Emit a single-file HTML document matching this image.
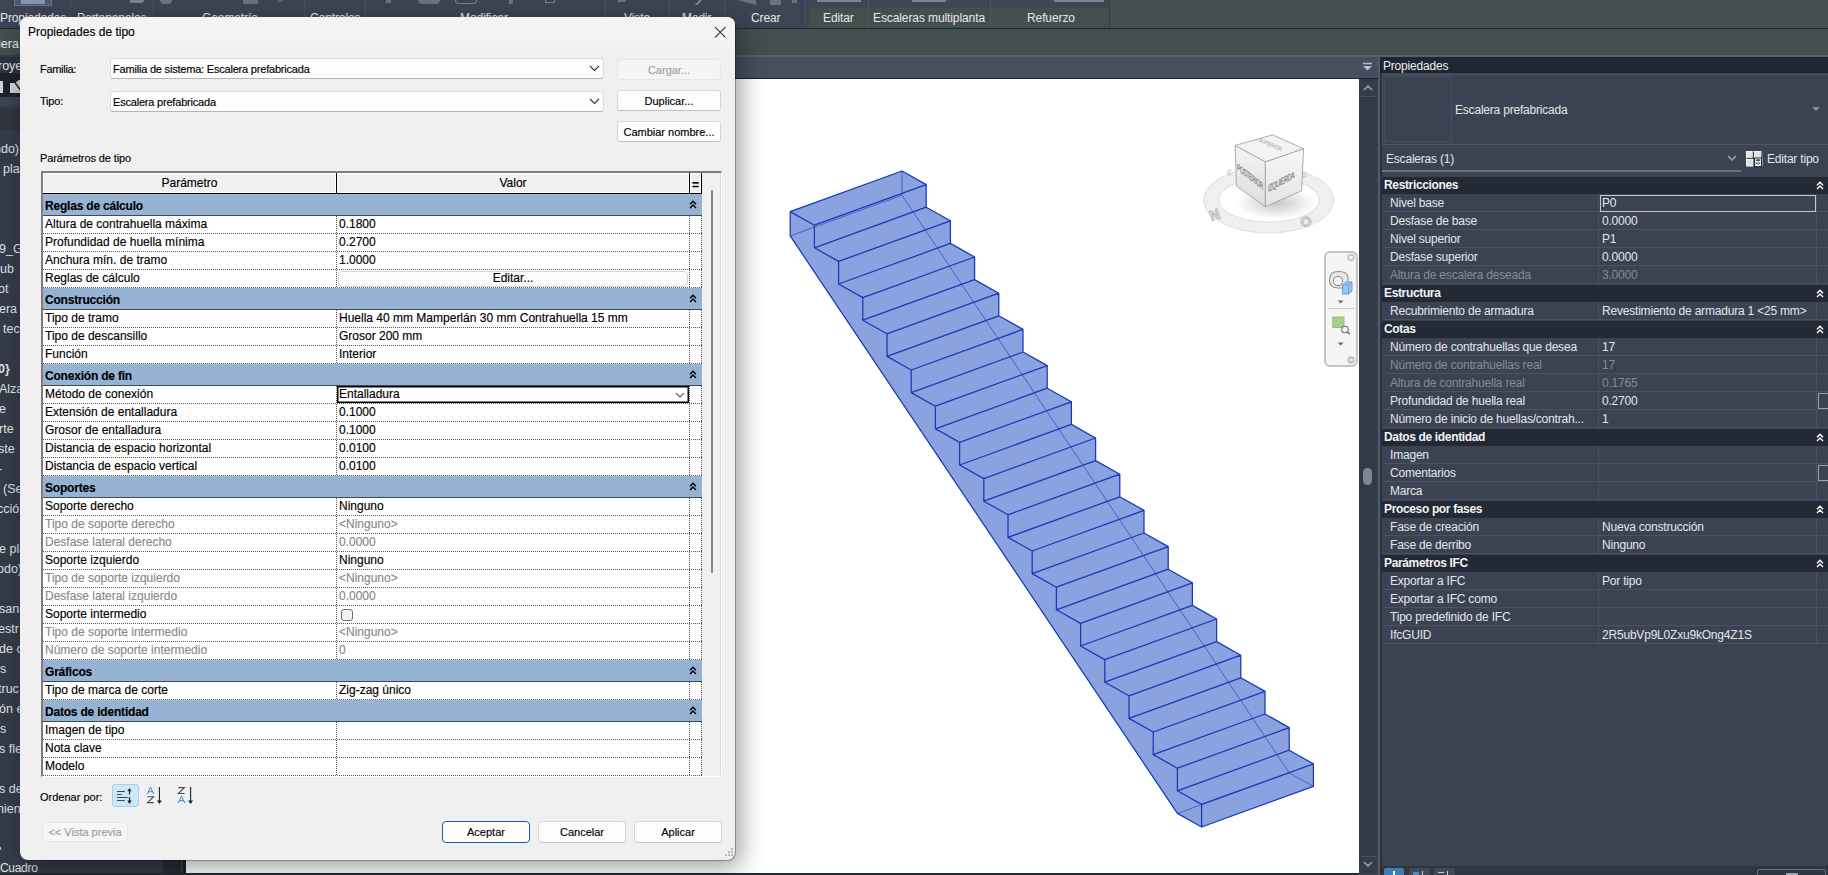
<!DOCTYPE html>
<html><head><meta charset="utf-8">
<style>
*{box-sizing:border-box;margin:0;padding:0}
html,body{width:1828px;height:875px;overflow:hidden}
body{position:relative;background:#3b4352;font-family:"Liberation Sans",sans-serif;font-size:12px;color:#000}
.a{position:absolute}
.t{position:absolute;white-space:nowrap;line-height:14px}
.dlgt .t{-webkit-text-stroke:0.15px currentColor}
#ribbon{left:0;top:0;width:1828px;height:28px;background:#3d4555}
#ribline{left:0;top:28px;width:1828px;height:1px;background:#212929}
#optbar{left:0;top:29px;width:1828px;height:26px;background:#434f4f}
.rl{color:#e6e8ea;font-size:12.5px}
#browser{left:0;top:55px;width:186px;height:820px;background:#353c49}
.bl{color:#dfe3e8;font-size:12.5px}
#tabbar{left:186px;top:55px;width:1192px;height:23px;background:#464e60;border-top:2px solid #56616d}
#viewline{left:186px;top:78px;width:1192px;height:1px;background:#1c2028}
#view{left:186px;top:79px;width:1173px;height:794px;background:#fff;overflow:hidden}
#vscroll{left:1359px;top:79px;width:18px;height:794px;background:#333a46}
#status{left:0;top:873px;width:1359px;height:2px;background:#252a33}
#props{left:1378px;top:55px;width:450px;height:820px;background:#3b4352}
.pt{color:#e3e6ea;font-size:12px}
.pd{color:#8a909a}
#dlg{left:20px;top:17px;width:715px;height:843px;background:#f0f0f0;border-radius:8px;box-shadow:1px 1px 0 0 rgba(0,0,0,.28),5px 7px 26px rgba(0,0,0,.4)}
.dr{left:43px;width:659px;height:18px;background:#fff linear-gradient(90deg,#5a5a5a 50%,transparent 50%) 0 17px/2px 1px repeat-x}
.dv{width:1px;background:linear-gradient(180deg,#5a5a5a 50%,transparent 50%) 0 0/1px 2px repeat-y}
</style></head>
<body>
<div id="ribbon" class="a"></div>
<div id="ribline" class="a"></div>
<div id="optbar" class="a"></div>
<div id="browser" class="a"></div>
<!--BROWSER-->
<div id="tabbar" class="a"></div>
<div id="viewline" class="a"></div>
<div id="view" class="a"></div>
<div id="vscroll" class="a"></div>
<svg class="a" style="left:0;top:0" width="1828" height="875" viewBox="0 0 1828 875">
<polygon points="790.20,211.60 902.00,171.00 926.20,184.60 926.20,207.20 950.40,220.80 950.40,243.40 974.60,257.00 974.60,279.60 998.80,293.20 998.80,315.80 1023.00,329.40 1023.00,352.00 1047.20,365.60 1047.20,388.20 1071.40,401.80 1071.40,424.40 1095.60,438.00 1095.60,460.60 1119.80,474.20 1119.80,496.80 1144.00,510.40 1144.00,533.00 1168.20,546.60 1168.20,569.20 1192.40,582.80 1192.40,605.40 1216.60,619.00 1216.60,641.60 1240.80,655.20 1240.80,677.80 1265.00,691.40 1265.00,714.00 1289.20,727.60 1289.20,750.20 1313.40,763.80 1313.40,786.40 1201.60,827.00 1177.40,813.40 790.20,235.90" fill="#8aa2e0"/>
<path d="M902.00,171.00L902.00,195.00M790.20,235.90L902.00,195.30M902.00,195.30L1289.20,772.80M1177.40,813.40L1289.20,772.80M1289.20,772.80L1313.40,786.40" stroke="#3552c4" stroke-width="0.8" fill="none"/>
<path d="M790.20,211.60L902.00,171.00M902.00,171.00L926.20,184.60M790.20,211.60L814.40,225.20M790.20,211.60L790.20,235.90M790.20,235.90L1177.40,813.40M1177.40,813.40L1201.60,827.00M1201.60,827.00L1313.40,786.40M814.40,225.20L926.20,184.60M814.40,247.80L926.20,207.20M814.40,225.20L814.40,247.80M926.20,184.60L926.20,207.20M814.40,247.80L838.60,261.40M926.20,207.20L950.40,220.80M838.60,261.40L950.40,220.80M838.60,284.00L950.40,243.40M838.60,261.40L838.60,284.00M950.40,220.80L950.40,243.40M838.60,284.00L862.80,297.60M950.40,243.40L974.60,257.00M862.80,297.60L974.60,257.00M862.80,320.20L974.60,279.60M862.80,297.60L862.80,320.20M974.60,257.00L974.60,279.60M862.80,320.20L887.00,333.80M974.60,279.60L998.80,293.20M887.00,333.80L998.80,293.20M887.00,356.40L998.80,315.80M887.00,333.80L887.00,356.40M998.80,293.20L998.80,315.80M887.00,356.40L911.20,370.00M998.80,315.80L1023.00,329.40M911.20,370.00L1023.00,329.40M911.20,392.60L1023.00,352.00M911.20,370.00L911.20,392.60M1023.00,329.40L1023.00,352.00M911.20,392.60L935.40,406.20M1023.00,352.00L1047.20,365.60M935.40,406.20L1047.20,365.60M935.40,428.80L1047.20,388.20M935.40,406.20L935.40,428.80M1047.20,365.60L1047.20,388.20M935.40,428.80L959.60,442.40M1047.20,388.20L1071.40,401.80M959.60,442.40L1071.40,401.80M959.60,465.00L1071.40,424.40M959.60,442.40L959.60,465.00M1071.40,401.80L1071.40,424.40M959.60,465.00L983.80,478.60M1071.40,424.40L1095.60,438.00M983.80,478.60L1095.60,438.00M983.80,501.20L1095.60,460.60M983.80,478.60L983.80,501.20M1095.60,438.00L1095.60,460.60M983.80,501.20L1008.00,514.80M1095.60,460.60L1119.80,474.20M1008.00,514.80L1119.80,474.20M1008.00,537.40L1119.80,496.80M1008.00,514.80L1008.00,537.40M1119.80,474.20L1119.80,496.80M1008.00,537.40L1032.20,551.00M1119.80,496.80L1144.00,510.40M1032.20,551.00L1144.00,510.40M1032.20,573.60L1144.00,533.00M1032.20,551.00L1032.20,573.60M1144.00,510.40L1144.00,533.00M1032.20,573.60L1056.40,587.20M1144.00,533.00L1168.20,546.60M1056.40,587.20L1168.20,546.60M1056.40,609.80L1168.20,569.20M1056.40,587.20L1056.40,609.80M1168.20,546.60L1168.20,569.20M1056.40,609.80L1080.60,623.40M1168.20,569.20L1192.40,582.80M1080.60,623.40L1192.40,582.80M1080.60,646.00L1192.40,605.40M1080.60,623.40L1080.60,646.00M1192.40,582.80L1192.40,605.40M1080.60,646.00L1104.80,659.60M1192.40,605.40L1216.60,619.00M1104.80,659.60L1216.60,619.00M1104.80,682.20L1216.60,641.60M1104.80,659.60L1104.80,682.20M1216.60,619.00L1216.60,641.60M1104.80,682.20L1129.00,695.80M1216.60,641.60L1240.80,655.20M1129.00,695.80L1240.80,655.20M1129.00,718.40L1240.80,677.80M1129.00,695.80L1129.00,718.40M1240.80,655.20L1240.80,677.80M1129.00,718.40L1153.20,732.00M1240.80,677.80L1265.00,691.40M1153.20,732.00L1265.00,691.40M1153.20,754.60L1265.00,714.00M1153.20,732.00L1153.20,754.60M1265.00,691.40L1265.00,714.00M1153.20,754.60L1177.40,768.20M1265.00,714.00L1289.20,727.60M1177.40,768.20L1289.20,727.60M1177.40,790.80L1289.20,750.20M1177.40,768.20L1177.40,790.80M1289.20,727.60L1289.20,750.20M1177.40,790.80L1201.60,804.40M1289.20,750.20L1313.40,763.80M1201.60,804.40L1313.40,763.80M1201.60,827.00L1313.40,786.40M1201.60,804.40L1201.60,827.00M1313.40,763.80L1313.40,786.40" stroke="#1838b8" stroke-width="1.25" fill="none" stroke-linecap="round"/>
</svg>
<svg class="a" style="left:1190px;top:120px" width="160" height="130" viewBox="1190 120 160 130">
<defs><radialGradient id="sh" cx="0.5" cy="0.5" r="0.5"><stop offset="0" stop-color="#000" stop-opacity="0.22"/><stop offset="1" stop-color="#000" stop-opacity="0"/></radialGradient><linearGradient id="lf" x1="0" y1="0" x2="0" y2="1"><stop offset="0" stop-color="#f4f4f4"/><stop offset="1" stop-color="#dcdcdc"/></linearGradient><linearGradient id="rf" x1="0" y1="0" x2="0" y2="1"><stop offset="0" stop-color="#f7f7f7"/><stop offset="1" stop-color="#e4e4e4"/></linearGradient></defs>
<path fill-rule="evenodd" d="M1203.7,200a65,33 0 1,0 130,0a65,33 0 1,0 -130,0ZM1219,200a50,22 0 1,0 100,0a50,22 0 1,0 -100,0Z" fill="#efefef" stroke="#cdcdcd" stroke-width="1" stroke-dasharray="1.5 1"/>
<ellipse cx="1276" cy="203" rx="40" ry="16" fill="url(#sh)"/>
<text x="1209" y="219" font-family="Liberation Sans" font-size="14" font-weight="bold" fill="#ececec" stroke="#b4b4b4" stroke-width="0.9" transform="rotate(-20 1216 213)">N</text>
<text x="1301" y="227" font-family="Liberation Sans" font-size="14" font-weight="bold" fill="#ececec" stroke="#b4b4b4" stroke-width="0.9" transform="rotate(15 1308 220)">O</text>
<text x="1227" y="175" font-family="Liberation Sans" font-size="7" fill="#d8d8d8" stroke="#c8c8c8" stroke-width="0.3">E</text>
<text x="1302" y="177" font-family="Liberation Sans" font-size="7" fill="#d8d8d8" stroke="#c8c8c8" stroke-width="0.3">S</text>
<polygon points="1235.1,145.4 1265.4,161.8 1265.4,206.6 1236.4,186.2" fill="url(#lf)" stroke="#9a9a9a" stroke-width="0.8"/>
<polygon points="1265.4,161.8 1303.6,148.7 1301.6,190.8 1265.4,206.6" fill="url(#rf)" stroke="#9a9a9a" stroke-width="0.8"/>
<polygon points="1235.1,145.4 1272.6,134.9 1303.6,148.7 1265.4,161.8" fill="#f3f3f3" stroke="#9a9a9a" stroke-width="0.8"/>
<text font-family="Liberation Sans" font-size="8" fill="#7a7a7a" stroke="#8a8a8a" stroke-width="0.25" transform="translate(1237,170) skewY(37) scale(0.6,1.2)" letter-spacing="-0.4">POSTERIOR</text>
<text font-family="Liberation Sans" font-size="8" fill="#7a7a7a" stroke="#8a8a8a" stroke-width="0.25" transform="translate(1268,192) skewY(-28) scale(0.66,1.2)" letter-spacing="-0.4">IZQUIERDA</text>
<text font-family="Liberation Sans" font-size="6" fill="#9a9a9a" transform="translate(1258,141) rotate(25) scale(0.8,1)">SUPERIOR</text>
</svg>
<div class="a" style="left:1324px;top:251px;width:34px;height:116px;background:#f5f5f5;border:2px solid #c4c4c4;border-radius:6px"></div>
<svg class="a" style="left:1324px;top:251px" width="34" height="116" viewBox="0 0 34 116">
<circle cx="27" cy="6.5" r="3.8" fill="#c4c4c4"/><path d="M25.3 4.8L28.7 8.2M28.7 4.8L25.3 8.2" stroke="#fff" stroke-width="1.1"/>
<path d="M14.5 20.5C20 20.5 24 22 24 27V31L19 37H14C8.5 37 5.5 34 5.5 29C5.5 23.5 9 20.5 14.5 20.5Z" fill="#e9e9e9" stroke="#8f8f8f" stroke-width="1.1"/>
<circle cx="14" cy="30" r="4.6" fill="#f6f6f6" stroke="#8f8f8f" stroke-width="1.1"/>
<path d="M18.5 34L22 31H28V40L24.5 43H18.5Z" fill="#9cc6ee" stroke="#5b97d3" stroke-width="0.9"/><path d="M18.5 34H24.5L28 31M24.5 34V43" stroke="#5b97d3" stroke-width="0.8" fill="none"/>
<polygon points="13.6,49.5 19.6,49.5 16.6,52.5" fill="#6a6a6a"/>
<path d="M4 57.5H30" stroke="#c8c8c8" stroke-width="1"/>
<rect x="8.8" y="66" width="11.2" height="10.5" fill="#a9d08e" stroke="#84b468" stroke-width="0.8"/>
<circle cx="21" cy="78.5" r="3.3" fill="#f5f5f5" stroke="#707070" stroke-width="1.1"/><path d="M23.3 80.8L25.8 83.3" stroke="#707070" stroke-width="1.5"/>
<polygon points="13.6,91.5 19.6,91.5 16.6,94.5" fill="#6a6a6a"/>
<circle cx="27" cy="109" r="3.8" fill="#c4c4c4"/><path d="M25 109H29" stroke="#fff" stroke-width="1.1"/>
</svg>
<svg class="a" style="left:1359px;top:79px" width="18" height="794" viewBox="0 0 18 794"><rect x="0" y="0" width="18" height="17" fill="#353c48"/><path d="M2 17.5H17" stroke="#4a5260"/><path d="M5 11L9 7L13 11" stroke="#9aa0aa" stroke-width="1.6" fill="none"/><rect x="0" y="777" width="18" height="17" fill="#353c48"/><path d="M2 777.5H17" stroke="#4a5260"/><path d="M5 783L9 787L13 783" stroke="#9aa0aa" stroke-width="1.6" fill="none"/><rect x="4" y="389" width="9" height="17" rx="4.5" fill="#7d8796"/></svg>
<div id="props" class="a"></div>
<div class="a" style="left:1378px;top:55px;width:450px;height:2px;background:#57616b"></div>
<div class="a" style="left:1378px;top:57px;width:2px;height:818px;background:#535b69"></div>
<div class="a" style="left:1380px;top:57px;width:2px;height:818px;background:#2c323d"></div>
<div class="a" style="left:1380px;top:57px;width:448px;height:16px;background:#202631"></div>
<div class="t pt" style="left:1383px;top:59px;font-size:12px;letter-spacing:-0.2px;color:#eceef0">Propiedades</div>
<div class="a" style="left:1382px;top:74px;width:446px;height:71px;border:1px solid #4e5665;border-right:none"></div>
<div class="a" style="left:1384px;top:76px;width:68px;height:66px;border:1px solid #474f5d"></div>
<div class="t pt" style="left:1455px;top:103px;font-size:12px;letter-spacing:-0.2px">Escalera prefabricada</div>
<svg class="a" style="left:1811px;top:106px" width="10" height="6" viewBox="0 0 10 6"><path d="M1 1H9L5 5Z" fill="#8a909a"/></svg>
<div class="t pt" style="left:1386px;top:152px;font-size:12px;letter-spacing:-0.2px">Escaleras (1)</div>
<svg class="a" style="left:1727px;top:155px" width="10" height="7" viewBox="0 0 10 7"><path d="M1 1L5 5L9 1" fill="none" stroke="#8a909a" stroke-width="1.8"/></svg>
<div class="a" style="left:1382px;top:170px;width:359px;height:2px;background:#6b7380"></div>
<svg class="a" style="left:1744px;top:149px" width="20" height="20" viewBox="1744 149 20 20"><rect x="1746" y="151" width="16.5" height="15.5" fill="#f2f3f5"/><path d="M1753.3 151.5V158.3H1746.5M1762 151V158M1754 158.3V166.5M1746.3 166V165.8" stroke="#1d2027" stroke-width="1.1" fill="none"/><rect x="1747.3" y="152.3" width="5" height="5" fill="#dfe1e5"/><rect x="1755" y="152.3" width="6" height="5" fill="#dfe1e5"/><rect x="1747.3" y="159.5" width="5" height="5.5" fill="#dfe1e5"/><rect x="1754.6" y="158" width="7" height="8.6" fill="#f4f6f8" stroke="#1d2027" stroke-width="1"/><rect x="1756" y="159.3" width="4.2" height="1.8" fill="#2e5c95"/><path d="M1756 163.4H1760.2" stroke="#222" stroke-width="0.9"/><circle cx="1758.4" cy="163.4" r="1" fill="#fff" stroke="#333" stroke-width="0.6"/></svg>
<div class="t pt" style="left:1767px;top:152px;font-size:12px;letter-spacing:-0.2px">Editar tipo</div>
<div class="a" style="left:1382px;top:177px;width:446px;height:17px;background:#232935"></div>
<div class="t" style="left:1384px;top:178px;font-weight:bold;color:#f2f3f5;font-size:12px;letter-spacing:-0.35px">Restricciones</div>
<svg class="a" style="left:1816px;top:181px" width="8" height="9" viewBox="0 0 8 9"><path d="M1 4.2L4 1.2L7 4.2M1 8L4 5L7 8" fill="none" stroke="#fff" stroke-width="1.45"/></svg>
<div class="a" style="left:1382px;top:211px;width:446px;height:1px;background:#4a5261"></div>
<div class="a" style="left:1598px;top:194px;width:1px;height:18px;background:#4a5261"></div>
<div class="a" style="left:1816px;top:194px;width:1px;height:18px;background:#4a5261"></div>
<div class="t" style="left:1390px;top:196px;color:#e3e6ea;font-size:12px;letter-spacing:-0.2px">Nivel base</div>
<div class="t" style="left:1602px;top:196px;color:#e3e6ea;font-size:12px;letter-spacing:-0.2px">P0</div>
<div class="a" style="left:1382px;top:229px;width:446px;height:1px;background:#4a5261"></div>
<div class="a" style="left:1598px;top:212px;width:1px;height:18px;background:#4a5261"></div>
<div class="a" style="left:1816px;top:212px;width:1px;height:18px;background:#4a5261"></div>
<div class="t" style="left:1390px;top:214px;color:#e3e6ea;font-size:12px;letter-spacing:-0.2px">Desfase de base</div>
<div class="t" style="left:1602px;top:214px;color:#e3e6ea;font-size:12px;letter-spacing:-0.2px">0.0000</div>
<div class="a" style="left:1382px;top:247px;width:446px;height:1px;background:#4a5261"></div>
<div class="a" style="left:1598px;top:230px;width:1px;height:18px;background:#4a5261"></div>
<div class="a" style="left:1816px;top:230px;width:1px;height:18px;background:#4a5261"></div>
<div class="t" style="left:1390px;top:232px;color:#e3e6ea;font-size:12px;letter-spacing:-0.2px">Nivel superior</div>
<div class="t" style="left:1602px;top:232px;color:#e3e6ea;font-size:12px;letter-spacing:-0.2px">P1</div>
<div class="a" style="left:1382px;top:265px;width:446px;height:1px;background:#4a5261"></div>
<div class="a" style="left:1598px;top:248px;width:1px;height:18px;background:#4a5261"></div>
<div class="a" style="left:1816px;top:248px;width:1px;height:18px;background:#4a5261"></div>
<div class="t" style="left:1390px;top:250px;color:#e3e6ea;font-size:12px;letter-spacing:-0.2px">Desfase superior</div>
<div class="t" style="left:1602px;top:250px;color:#e3e6ea;font-size:12px;letter-spacing:-0.2px">0.0000</div>
<div class="a" style="left:1382px;top:283px;width:446px;height:1px;background:#4a5261"></div>
<div class="a" style="left:1598px;top:266px;width:1px;height:18px;background:#4a5261"></div>
<div class="a" style="left:1816px;top:266px;width:1px;height:18px;background:#4a5261"></div>
<div class="t" style="left:1390px;top:268px;color:#858b95;font-size:12px;letter-spacing:-0.2px">Altura de escalera deseada</div>
<div class="t" style="left:1602px;top:268px;color:#858b95;font-size:12px;letter-spacing:-0.2px">3.0000</div>
<div class="a" style="left:1382px;top:285px;width:446px;height:17px;background:#232935"></div>
<div class="t" style="left:1384px;top:286px;font-weight:bold;color:#f2f3f5;font-size:12px;letter-spacing:-0.35px">Estructura</div>
<svg class="a" style="left:1816px;top:289px" width="8" height="9" viewBox="0 0 8 9"><path d="M1 4.2L4 1.2L7 4.2M1 8L4 5L7 8" fill="none" stroke="#fff" stroke-width="1.45"/></svg>
<div class="a" style="left:1382px;top:319px;width:446px;height:1px;background:#4a5261"></div>
<div class="a" style="left:1598px;top:302px;width:1px;height:18px;background:#4a5261"></div>
<div class="a" style="left:1816px;top:302px;width:1px;height:18px;background:#4a5261"></div>
<div class="t" style="left:1390px;top:304px;color:#e3e6ea;font-size:12px;letter-spacing:-0.2px">Recubrimiento de armadura</div>
<div class="t" style="left:1602px;top:304px;color:#e3e6ea;font-size:12px;letter-spacing:-0.2px">Revestimiento de armadura 1 &lt;25 mm&gt;</div>
<div class="a" style="left:1382px;top:321px;width:446px;height:17px;background:#232935"></div>
<div class="t" style="left:1384px;top:322px;font-weight:bold;color:#f2f3f5;font-size:12px;letter-spacing:-0.35px">Cotas</div>
<svg class="a" style="left:1816px;top:325px" width="8" height="9" viewBox="0 0 8 9"><path d="M1 4.2L4 1.2L7 4.2M1 8L4 5L7 8" fill="none" stroke="#fff" stroke-width="1.45"/></svg>
<div class="a" style="left:1382px;top:355px;width:446px;height:1px;background:#4a5261"></div>
<div class="a" style="left:1598px;top:338px;width:1px;height:18px;background:#4a5261"></div>
<div class="a" style="left:1816px;top:338px;width:1px;height:18px;background:#4a5261"></div>
<div class="t" style="left:1390px;top:340px;color:#e3e6ea;font-size:12px;letter-spacing:-0.2px">Número de contrahuellas que desea</div>
<div class="t" style="left:1602px;top:340px;color:#e3e6ea;font-size:12px;letter-spacing:-0.2px">17</div>
<div class="a" style="left:1382px;top:373px;width:446px;height:1px;background:#4a5261"></div>
<div class="a" style="left:1598px;top:356px;width:1px;height:18px;background:#4a5261"></div>
<div class="a" style="left:1816px;top:356px;width:1px;height:18px;background:#4a5261"></div>
<div class="t" style="left:1390px;top:358px;color:#858b95;font-size:12px;letter-spacing:-0.2px">Número de contrahuellas real</div>
<div class="t" style="left:1602px;top:358px;color:#858b95;font-size:12px;letter-spacing:-0.2px">17</div>
<div class="a" style="left:1382px;top:391px;width:446px;height:1px;background:#4a5261"></div>
<div class="a" style="left:1598px;top:374px;width:1px;height:18px;background:#4a5261"></div>
<div class="a" style="left:1816px;top:374px;width:1px;height:18px;background:#4a5261"></div>
<div class="t" style="left:1390px;top:376px;color:#858b95;font-size:12px;letter-spacing:-0.2px">Altura de contrahuella real</div>
<div class="t" style="left:1602px;top:376px;color:#858b95;font-size:12px;letter-spacing:-0.2px">0.1765</div>
<div class="a" style="left:1382px;top:409px;width:446px;height:1px;background:#4a5261"></div>
<div class="a" style="left:1598px;top:392px;width:1px;height:18px;background:#4a5261"></div>
<div class="a" style="left:1816px;top:392px;width:1px;height:18px;background:#4a5261"></div>
<div class="t" style="left:1390px;top:394px;color:#e3e6ea;font-size:12px;letter-spacing:-0.2px">Profundidad de huella real</div>
<div class="t" style="left:1602px;top:394px;color:#e3e6ea;font-size:12px;letter-spacing:-0.2px">0.2700</div>
<div class="a" style="left:1382px;top:427px;width:446px;height:1px;background:#4a5261"></div>
<div class="a" style="left:1598px;top:410px;width:1px;height:18px;background:#4a5261"></div>
<div class="a" style="left:1816px;top:410px;width:1px;height:18px;background:#4a5261"></div>
<div class="t" style="left:1390px;top:412px;color:#e3e6ea;font-size:12px;letter-spacing:-0.2px">Número de inicio de huellas/contrah...</div>
<div class="t" style="left:1602px;top:412px;color:#e3e6ea;font-size:12px;letter-spacing:-0.2px">1</div>
<div class="a" style="left:1382px;top:429px;width:446px;height:17px;background:#232935"></div>
<div class="t" style="left:1384px;top:430px;font-weight:bold;color:#f2f3f5;font-size:12px;letter-spacing:-0.35px">Datos de identidad</div>
<svg class="a" style="left:1816px;top:433px" width="8" height="9" viewBox="0 0 8 9"><path d="M1 4.2L4 1.2L7 4.2M1 8L4 5L7 8" fill="none" stroke="#fff" stroke-width="1.45"/></svg>
<div class="a" style="left:1382px;top:463px;width:446px;height:1px;background:#4a5261"></div>
<div class="a" style="left:1598px;top:446px;width:1px;height:18px;background:#4a5261"></div>
<div class="a" style="left:1816px;top:446px;width:1px;height:18px;background:#4a5261"></div>
<div class="t" style="left:1390px;top:448px;color:#e3e6ea;font-size:12px;letter-spacing:-0.2px">Imagen</div>
<div class="a" style="left:1382px;top:481px;width:446px;height:1px;background:#4a5261"></div>
<div class="a" style="left:1598px;top:464px;width:1px;height:18px;background:#4a5261"></div>
<div class="a" style="left:1816px;top:464px;width:1px;height:18px;background:#4a5261"></div>
<div class="t" style="left:1390px;top:466px;color:#e3e6ea;font-size:12px;letter-spacing:-0.2px">Comentarios</div>
<div class="a" style="left:1382px;top:499px;width:446px;height:1px;background:#4a5261"></div>
<div class="a" style="left:1598px;top:482px;width:1px;height:18px;background:#4a5261"></div>
<div class="a" style="left:1816px;top:482px;width:1px;height:18px;background:#4a5261"></div>
<div class="t" style="left:1390px;top:484px;color:#e3e6ea;font-size:12px;letter-spacing:-0.2px">Marca</div>
<div class="a" style="left:1382px;top:501px;width:446px;height:17px;background:#232935"></div>
<div class="t" style="left:1384px;top:502px;font-weight:bold;color:#f2f3f5;font-size:12px;letter-spacing:-0.35px">Proceso por fases</div>
<svg class="a" style="left:1816px;top:505px" width="8" height="9" viewBox="0 0 8 9"><path d="M1 4.2L4 1.2L7 4.2M1 8L4 5L7 8" fill="none" stroke="#fff" stroke-width="1.45"/></svg>
<div class="a" style="left:1382px;top:535px;width:446px;height:1px;background:#4a5261"></div>
<div class="a" style="left:1598px;top:518px;width:1px;height:18px;background:#4a5261"></div>
<div class="a" style="left:1816px;top:518px;width:1px;height:18px;background:#4a5261"></div>
<div class="t" style="left:1390px;top:520px;color:#e3e6ea;font-size:12px;letter-spacing:-0.2px">Fase de creación</div>
<div class="t" style="left:1602px;top:520px;color:#e3e6ea;font-size:12px;letter-spacing:-0.2px">Nueva construcción</div>
<div class="a" style="left:1382px;top:553px;width:446px;height:1px;background:#4a5261"></div>
<div class="a" style="left:1598px;top:536px;width:1px;height:18px;background:#4a5261"></div>
<div class="a" style="left:1816px;top:536px;width:1px;height:18px;background:#4a5261"></div>
<div class="t" style="left:1390px;top:538px;color:#e3e6ea;font-size:12px;letter-spacing:-0.2px">Fase de derribo</div>
<div class="t" style="left:1602px;top:538px;color:#e3e6ea;font-size:12px;letter-spacing:-0.2px">Ninguno</div>
<div class="a" style="left:1382px;top:555px;width:446px;height:17px;background:#232935"></div>
<div class="t" style="left:1384px;top:556px;font-weight:bold;color:#f2f3f5;font-size:12px;letter-spacing:-0.35px">Parámetros IFC</div>
<svg class="a" style="left:1816px;top:559px" width="8" height="9" viewBox="0 0 8 9"><path d="M1 4.2L4 1.2L7 4.2M1 8L4 5L7 8" fill="none" stroke="#fff" stroke-width="1.45"/></svg>
<div class="a" style="left:1382px;top:589px;width:446px;height:1px;background:#4a5261"></div>
<div class="a" style="left:1598px;top:572px;width:1px;height:18px;background:#4a5261"></div>
<div class="a" style="left:1816px;top:572px;width:1px;height:18px;background:#4a5261"></div>
<div class="t" style="left:1390px;top:574px;color:#e3e6ea;font-size:12px;letter-spacing:-0.2px">Exportar a IFC</div>
<div class="t" style="left:1602px;top:574px;color:#e3e6ea;font-size:12px;letter-spacing:-0.2px">Por tipo</div>
<div class="a" style="left:1382px;top:607px;width:446px;height:1px;background:#4a5261"></div>
<div class="a" style="left:1598px;top:590px;width:1px;height:18px;background:#4a5261"></div>
<div class="a" style="left:1816px;top:590px;width:1px;height:18px;background:#4a5261"></div>
<div class="t" style="left:1390px;top:592px;color:#e3e6ea;font-size:12px;letter-spacing:-0.2px">Exportar a IFC como</div>
<div class="a" style="left:1382px;top:625px;width:446px;height:1px;background:#4a5261"></div>
<div class="a" style="left:1598px;top:608px;width:1px;height:18px;background:#4a5261"></div>
<div class="a" style="left:1816px;top:608px;width:1px;height:18px;background:#4a5261"></div>
<div class="t" style="left:1390px;top:610px;color:#e3e6ea;font-size:12px;letter-spacing:-0.2px">Tipo predefinido de IFC</div>
<div class="a" style="left:1382px;top:643px;width:446px;height:1px;background:#4a5261"></div>
<div class="a" style="left:1598px;top:626px;width:1px;height:18px;background:#4a5261"></div>
<div class="a" style="left:1816px;top:626px;width:1px;height:18px;background:#4a5261"></div>
<div class="t" style="left:1390px;top:628px;color:#e3e6ea;font-size:12px;letter-spacing:-0.2px">IfcGUID</div>
<div class="t" style="left:1602px;top:628px;color:#e3e6ea;font-size:12px;letter-spacing:-0.2px">2R5ubVp9L0Zxu9kOng4Z1S</div>
<div class="a" style="left:1600px;top:195px;width:216px;height:17px;border:1px solid #c9c9c9"></div>
<div class="a" style="left:1818px;top:393px;width:10px;height:16px;border:1px solid #9aa0a8;border-right:none"></div>
<div class="a" style="left:1818px;top:465px;width:10px;height:16px;border:1px solid #9aa0a8;border-right:none"></div>
<div class="a" style="left:1382px;top:866px;width:446px;height:9px;background:#2f3541"></div>
<div class="a" style="left:1384px;top:868px;width:20px;height:7px;background:#3d7db2;border-radius:2px 2px 0 0"></div>
<div class="a" style="left:1393px;top:871px;width:2px;height:4px;background:#e8f0f8"></div>
<div class="a" style="left:1409px;top:868px;width:21px;height:7px;background:#414957;border-radius:2px 2px 0 0"></div>
<div class="a" style="left:1434px;top:868px;width:21px;height:7px;background:#414957;border-radius:2px 2px 0 0"></div>
<div class="a" style="left:1413px;top:872px;width:6px;height:3px;background:#4f88c0"></div><div class="a" style="left:1422px;top:871px;width:1px;height:4px;background:#c8ccd2"></div>
<div class="a" style="left:1438px;top:872px;width:6px;height:1px;background:#c8ccd2"></div><div class="a" style="left:1447px;top:871px;width:1px;height:4px;background:#c8ccd2"></div>
<div class="a" style="left:1757px;top:869px;width:69px;height:8px;border:1px solid #6a717c;border-bottom:none;border-radius:3px 3px 0 0"></div>
<div class="a" style="left:1786px;top:873px;width:12px;height:2px;background:#9aa0a8"></div>
<div class="a" style="left:809px;top:0;width:300px;height:28px;background:#454e4f"></div>
<div class="a" style="left:809px;top:0;width:300px;height:8px;background:#3e4656"></div>
<div class="a" style="left:1109px;top:0;width:719px;height:28px;background:#434f4f"></div>
<div class="a" style="left:70px;top:0;width:1px;height:28px;background:#4a5262"></div>
<div class="a" style="left:153px;top:0;width:1px;height:28px;background:#4a5262"></div>
<div class="a" style="left:304px;top:0;width:1px;height:28px;background:#4a5262"></div>
<div class="a" style="left:365px;top:0;width:1px;height:28px;background:#4a5262"></div>
<div class="a" style="left:605px;top:0;width:1px;height:28px;background:#4a5262"></div>
<div class="a" style="left:669px;top:0;width:1px;height:28px;background:#4a5262"></div>
<div class="a" style="left:724px;top:0;width:1px;height:28px;background:#4a5262"></div>
<div class="a" style="left:805px;top:0;width:1px;height:28px;background:#4a5262"></div>
<div class="a" style="left:868px;top:0px;width:1px;height:28px;background:#4f5859"></div>
<div class="a" style="left:990px;top:0px;width:1px;height:28px;background:#4f5859"></div>
<div class="a" style="left:1109px;top:0;width:1px;height:28px;background:#353d3e"></div>
<div class="a" style="left:817px;top:0;width:44px;height:2px;background:#7d8590"></div>
<div class="a" style="left:912px;top:0;width:34px;height:2px;background:#7d8590"></div>
<div class="a" style="left:1054px;top:0;width:50px;height:2px;background:#7d8590"></div>
<div class="a" style="left:14px;top:0;width:38px;height:6px;background:#4d5b70;border:1px solid #5f7794;border-top:none"></div>
<div class="a" style="left:21px;top:0;width:24px;height:4px;background:#8b95a3"></div>
<div class="a" style="left:130px;top:0;width:14px;height:3px;background:#7a828e;border-radius:0 0 7px 2px"></div>
<div class="a" style="left:160px;top:0;width:12px;height:4px;background:#6b7380;border-radius:0 0 6px 6px"></div>
<div class="a" style="left:243px;top:0;width:15px;height:4px;background:#6b7380"></div>
<div class="a" style="left:278px;top:0;width:5px;height:2px;background:#5c6470"></div>
<div class="a" style="left:386px;top:0;width:5px;height:3px;background:#6b7380"></div>
<div class="a" style="left:418px;top:0;width:22px;height:4px;background:#6b7380;border-radius:0 0 8px 8px"></div>
<div class="a" style="left:455px;top:0;width:22px;height:4px;border:1px solid #7a828e;border-top:none;border-radius:0 0 11px 11px"></div>
<div class="a" style="left:509px;top:0;width:4px;height:4px;background:#6b7380"></div>
<div class="a" style="left:545px;top:0;width:10px;height:3px;border:1px solid #7a828e;border-top:none"></div>
<div class="a" style="left:618px;top:0;width:8px;height:2px;background:#6b7380"></div>
<div class="a" style="left:692px;top:0;width:12px;height:5px;background:linear-gradient(135deg,transparent 45%,#7a828e 45%,#7a828e 60%,transparent 60%)"></div>
<div class="a" style="left:738px;top:0;width:18px;height:5px;background:#6b7380;clip-path:polygon(0 0,100% 0,100% 100%)"></div>
<div class="a" style="left:770px;top:0;width:11px;height:5px;background:#6b7380"></div>
<div class="a" style="left:792px;top:0;width:5px;height:3px;background:#6b7380"></div>
<div class="t rl" style="left:0px;top:11px;font-size:12px;letter-spacing:-0.1px">Propiedades</div>
<div class="t rl" style="left:77px;top:11px;font-size:12px;letter-spacing:-0.1px">Portapapeles</div>
<div class="t rl" style="left:202px;top:11px;font-size:12px;letter-spacing:-0.1px">Geometría</div>
<div class="t rl" style="left:310px;top:11px;font-size:12px;letter-spacing:-0.1px">Controles</div>
<div class="t rl" style="left:460px;top:11px;font-size:12px;letter-spacing:-0.1px">Modificar</div>
<div class="t rl" style="left:624px;top:11px;font-size:12px;letter-spacing:-0.1px">Vista</div>
<div class="t rl" style="left:682px;top:11px;font-size:12px;letter-spacing:-0.1px">Medir</div>
<div class="t rl" style="left:751px;top:11px;font-size:12px;letter-spacing:-0.1px">Crear</div>
<div class="t rl" style="left:823px;top:11px;font-size:12px;letter-spacing:-0.1px">Editar</div>
<div class="t rl" style="left:873px;top:11px;font-size:12px;letter-spacing:-0.1px">Escaleras multiplanta</div>
<div class="t rl" style="left:1027px;top:11px;font-size:12px;letter-spacing:-0.1px">Refuerzo</div>
<svg class="a" style="left:1362px;top:62px" width="11" height="9" viewBox="0 0 11 9"><path d="M1 1.5H10" stroke="#b8bec8" stroke-width="1.5"/><path d="M1 4H10L5.5 8.5Z" fill="#b8bec8"/></svg>
<div class="a" style="left:0;top:57px;width:186px;height:16px;background:#2c3340"></div>
<div class="a" style="left:0;top:73px;width:186px;height:24px;background:#1e222a"></div>
<div class="a" style="left:0;top:97px;width:186px;height:11px;background:#3d4454"></div>
<div class="a" style="left:0;top:105px;width:186px;height:3px;background:#373e4b"></div>
<div class="a" style="left:0;top:108px;width:186px;height:22px;background:#30363f"></div>
<div class="a" style="left:0;top:81px;width:3px;height:12px;background:#d0d3d8"></div>
<svg class="a" style="left:10px;top:79px" width="12" height="15" viewBox="0 0 12 15"><path d="M0 4H5L8 1.5C9 0.5 11 1 12 2V14H0Z" fill="#cfd2d7"/><path d="M5 3.5L11 12" stroke="#1e222a" stroke-width="1.4"/></svg>
<div class="a" style="left:163px;top:860px;width:18px;height:13px;background:#262c36"></div>
<div class="a" style="left:183px;top:860px;width:3px;height:13px;background:#1c2028"></div>
<div class="t rl" style="left:-2px;top:37px;font-size:12.5px">lera</div>
<div class="t rl" style="left:-2px;top:59px;font-size:12.5px">roye</div>
<div class="t bl" style="left:-6px;top:142px;">ndo)</div>
<div class="t bl" style="left:3px;top:162px;">pla</div>
<div class="t bl" style="left:-1px;top:242px;">9_Ge</div>
<div class="t bl" style="left:0px;top:262px;">ub</div>
<div class="t bl" style="left:-2px;top:282px;">ot</div>
<div class="t bl" style="left:-1px;top:302px;">era</div>
<div class="t bl" style="left:3px;top:322px;">tec</div>
<div class="t bl" style="left:-2px;top:362px;font-weight:bold;">0}</div>
<div class="t bl" style="left:-1px;top:382px;">Alza</div>
<div class="t bl" style="left:-1px;top:402px;">e</div>
<div class="t bl" style="left:-1px;top:422px;">rte</div>
<div class="t bl" style="left:-2px;top:442px;">ste</div>
<div class="t bl" style="left:-2px;top:462px;">-</div>
<div class="t bl" style="left:3px;top:482px;">(Se</div>
<div class="t bl" style="left:-3px;top:502px;">cció</div>
<div class="t bl" style="left:-1px;top:542px;">e pla</div>
<div class="t bl" style="left:-3px;top:562px;">odo)</div>
<div class="t bl" style="left:-1px;top:602px;">sani</div>
<div class="t bl" style="left:-2px;top:622px;">estr</div>
<div class="t bl" style="left:-1px;top:642px;">de c</div>
<div class="t bl" style="left:0px;top:662px;">s</div>
<div class="t bl" style="left:-2px;top:682px;">truc</div>
<div class="t bl" style="left:-1px;top:702px;">ón e</div>
<div class="t bl" style="left:0px;top:722px;">s</div>
<div class="t bl" style="left:-1px;top:742px;">s fle</div>
<div class="t bl" style="left:-1px;top:782px;">s de</div>
<div class="t bl" style="left:-3px;top:802px;">nient</div>
<div class="t bl" style="left:-3px;top:842px;">•</div>
<div class="t bl" style="left:0px;top:861px;font-size:12px;letter-spacing:-0.3px;">Cuadro</div>
<div id="status" class="a"></div>
<div id="dlg" class="a"></div>
<div class="dlgt"><div class="a" style="left:20px;top:17px;width:715px;height:30px;background:#f3f3f3;border-radius:8px 8px 0 0"></div>
<div class="t" style="left:28px;top:25px;font-size:12px;color:#000">Propiedades de tipo</div>
<svg class="a" style="left:713px;top:25px" width="14" height="14" viewBox="0 0 14 14"><path d="M2 2L12.5 12.5M12.5 2L2 12.5" stroke="#111" stroke-width="1.05"/></svg>
<div class="t" style="left:40px;top:62px;font-size:11px;letter-spacing:-0.3px">Familia:</div>
<div class="t" style="left:40px;top:94px;font-size:11px;letter-spacing:-0.2px">Tipo:</div>
<div class="a" style="left:110px;top:58px;width:494px;height:21px;background:#fdfdfd;border:1px solid #dcdcdc;border-bottom-color:#b4b4b4;border-radius:3px"></div>
<div class="t" style="left:113px;top:62px;font-size:11px;letter-spacing:-0.2px">Familia de sistema: Escalera prefabricada</div>
<svg class="a" style="left:589px;top:65px" width="11" height="7" viewBox="0 0 11 7"><path d="M1 1L5.5 5.5L10 1" fill="none" stroke="#333" stroke-width="1.1"/></svg>
<div class="a" style="left:110px;top:91px;width:494px;height:21px;background:#fdfdfd;border:1px solid #dcdcdc;border-bottom-color:#b4b4b4;border-radius:3px"></div>
<div class="t" style="left:113px;top:95px;font-size:11px;letter-spacing:-0.2px">Escalera prefabricada</div>
<svg class="a" style="left:589px;top:98px" width="11" height="7" viewBox="0 0 11 7"><path d="M1 1L5.5 5.5L10 1" fill="none" stroke="#333" stroke-width="1.1"/></svg>
<div class="a" style="left:617px;top:59px;width:104px;height:21px;background:#f5f5f5;border:1px solid #e6e6e6;border-radius:3px"></div>
<div class="t" style="left:617px;top:63px;width:104px;text-align:center;color:#9d9d9d;font-size:11px">Cargar...</div>
<div class="a" style="left:617px;top:90px;width:104px;height:21px;background:#fdfdfd;border:1px solid #d6d6d6;border-bottom-color:#c2c2c2;border-radius:3px"></div>
<div class="t" style="left:617px;top:94px;width:104px;text-align:center;font-size:11px">Duplicar...</div>
<div class="a" style="left:617px;top:121px;width:104px;height:21px;background:#fdfdfd;border:1px solid #d6d6d6;border-bottom-color:#c2c2c2;border-radius:3px"></div>
<div class="t" style="left:617px;top:125px;width:104px;text-align:center;font-size:11px">Cambiar nombre...</div>
<div class="t" style="left:40px;top:151px;font-size:11px;letter-spacing:-0.1px">Parámetros de tipo</div>
<div class="a" style="left:41px;top:171px;width:681px;height:606px;background:#f0f0f0;border-top:2px solid #7d7d7d;border-left:2px solid #7d7d7d;border-right:1px solid #fff;border-bottom:1px solid #fff"></div>
<div class="a" style="left:720px;top:173px;width:1px;height:602px;background:#dadada"></div>
<div class="a" style="left:43px;top:173px;width:659px;height:20px;background:#f0f0f0"></div>
<div class="a" style="left:43px;top:173px;width:293px;height:20px;border:1px solid #fff"></div>
<div class="a" style="left:337px;top:173px;width:352px;height:20px;border:1px solid #fff"></div>
<div class="a" style="left:690px;top:173px;width:11px;height:20px;border:1px solid #fff"></div>
<div class="a" style="left:43px;top:193px;width:659px;height:1px;background:#000"></div>
<div class="a" style="left:336px;top:173px;width:1px;height:20px;background:#000"></div>
<div class="a" style="left:689px;top:173px;width:1px;height:20px;background:#000"></div>
<div class="a" style="left:701px;top:173px;width:1px;height:20px;background:#000"></div>
<div class="t" style="left:43px;top:176px;width:293px;text-align:center">Parámetro</div>
<div class="t" style="left:337px;top:176px;width:352px;text-align:center">Valor</div>
<div class="t" style="left:690px;top:178px;width:11px;text-align:center;font-size:12px;font-weight:bold">=</div>
<div class="a" style="left:43px;top:194px;width:659px;height:21px;background:#97b3d3"></div>
<div class="a" style="left:43px;top:215px;width:659px;height:1px;background:#3f4a58"></div>
<div class="t" style="left:45px;top:199px;font-weight:bold;font-size:12px;letter-spacing:-0.2px">Reglas de cálculo</div>
<svg class="a" style="left:689px;top:200px" width="8" height="9" viewBox="0 0 8 9"><path d="M1 4.2L4 1.2L7 4.2M1 8L4 5L7 8" fill="none" stroke="#000" stroke-width="1.45"/></svg>
<div class="a dr" style="top:216px"></div>
<div class="a dv" style="left:336px;top:216px;height:18px"></div>
<div class="a dv" style="left:689px;top:216px;height:18px"></div>
<div class="a dv" style="left:701px;top:216px;height:18px"></div>
<div class="t" style="left:45px;top:217px;color:#000">Altura de contrahuella máxima</div>
<div class="t" style="left:339px;top:217px;color:#000">0.1800</div>
<div class="a dr" style="top:234px"></div>
<div class="a dv" style="left:336px;top:234px;height:18px"></div>
<div class="a dv" style="left:689px;top:234px;height:18px"></div>
<div class="a dv" style="left:701px;top:234px;height:18px"></div>
<div class="t" style="left:45px;top:235px;color:#000">Profundidad de huella mínima</div>
<div class="t" style="left:339px;top:235px;color:#000">0.2700</div>
<div class="a dr" style="top:252px"></div>
<div class="a dv" style="left:336px;top:252px;height:18px"></div>
<div class="a dv" style="left:689px;top:252px;height:18px"></div>
<div class="a dv" style="left:701px;top:252px;height:18px"></div>
<div class="t" style="left:45px;top:253px;color:#000">Anchura mín. de tramo</div>
<div class="t" style="left:339px;top:253px;color:#000">1.0000</div>
<div class="a dr" style="top:270px"></div>
<div class="a dv" style="left:336px;top:270px;height:18px"></div>
<div class="a dv" style="left:689px;top:270px;height:18px"></div>
<div class="a dv" style="left:701px;top:270px;height:18px"></div>
<div class="t" style="left:45px;top:271px;color:#000">Reglas de cálculo</div>
<div class="a" style="left:338px;top:271px;width:350px;height:16px;background:#fbfbfb;border:1px solid #d4d4d4;border-radius:4px"></div>
<div class="t" style="left:338px;top:271px;width:350px;text-align:center">Editar...</div>
<div class="a" style="left:43px;top:288px;width:659px;height:21px;background:#97b3d3"></div>
<div class="a" style="left:43px;top:309px;width:659px;height:1px;background:#3f4a58"></div>
<div class="t" style="left:45px;top:293px;font-weight:bold;font-size:12px;letter-spacing:-0.2px">Construcción</div>
<svg class="a" style="left:689px;top:294px" width="8" height="9" viewBox="0 0 8 9"><path d="M1 4.2L4 1.2L7 4.2M1 8L4 5L7 8" fill="none" stroke="#000" stroke-width="1.45"/></svg>
<div class="a dr" style="top:310px"></div>
<div class="a dv" style="left:336px;top:310px;height:18px"></div>
<div class="a dv" style="left:689px;top:310px;height:18px"></div>
<div class="a dv" style="left:701px;top:310px;height:18px"></div>
<div class="t" style="left:45px;top:311px;color:#000">Tipo de tramo</div>
<div class="t" style="left:339px;top:311px;color:#000">Huella 40 mm Mamperlán 30 mm Contrahuella 15 mm</div>
<div class="a dr" style="top:328px"></div>
<div class="a dv" style="left:336px;top:328px;height:18px"></div>
<div class="a dv" style="left:689px;top:328px;height:18px"></div>
<div class="a dv" style="left:701px;top:328px;height:18px"></div>
<div class="t" style="left:45px;top:329px;color:#000">Tipo de descansillo</div>
<div class="t" style="left:339px;top:329px;color:#000">Grosor 200 mm</div>
<div class="a dr" style="top:346px"></div>
<div class="a dv" style="left:336px;top:346px;height:18px"></div>
<div class="a dv" style="left:689px;top:346px;height:18px"></div>
<div class="a dv" style="left:701px;top:346px;height:18px"></div>
<div class="t" style="left:45px;top:347px;color:#000">Función</div>
<div class="t" style="left:339px;top:347px;color:#000">Interior</div>
<div class="a" style="left:43px;top:364px;width:659px;height:21px;background:#97b3d3"></div>
<div class="a" style="left:43px;top:385px;width:659px;height:1px;background:#3f4a58"></div>
<div class="t" style="left:45px;top:369px;font-weight:bold;font-size:12px;letter-spacing:-0.2px">Conexión de fin</div>
<svg class="a" style="left:689px;top:370px" width="8" height="9" viewBox="0 0 8 9"><path d="M1 4.2L4 1.2L7 4.2M1 8L4 5L7 8" fill="none" stroke="#000" stroke-width="1.45"/></svg>
<div class="a dr" style="top:386px"></div>
<div class="a dv" style="left:336px;top:386px;height:18px"></div>
<div class="a dv" style="left:689px;top:386px;height:18px"></div>
<div class="a dv" style="left:701px;top:386px;height:18px"></div>
<div class="t" style="left:45px;top:387px;color:#000">Método de conexión</div>
<div class="a" style="left:337px;top:386px;width:352px;height:17px;background:#fff;border:1px solid #000;box-shadow:inset 0 0 0 0.5px #000"></div>
<div class="t" style="left:339px;top:387px">Entalladura</div>
<svg class="a" style="left:675px;top:392px" width="10" height="6" viewBox="0 0 10 6"><path d="M1 1L5 5L9 1" fill="none" stroke="#7a7a7a" stroke-width="1.5"/></svg>
<div class="a dr" style="top:404px"></div>
<div class="a dv" style="left:336px;top:404px;height:18px"></div>
<div class="a dv" style="left:689px;top:404px;height:18px"></div>
<div class="a dv" style="left:701px;top:404px;height:18px"></div>
<div class="t" style="left:45px;top:405px;color:#000">Extensión de entalladura</div>
<div class="t" style="left:339px;top:405px;color:#000">0.1000</div>
<div class="a dr" style="top:422px"></div>
<div class="a dv" style="left:336px;top:422px;height:18px"></div>
<div class="a dv" style="left:689px;top:422px;height:18px"></div>
<div class="a dv" style="left:701px;top:422px;height:18px"></div>
<div class="t" style="left:45px;top:423px;color:#000">Grosor de entalladura</div>
<div class="t" style="left:339px;top:423px;color:#000">0.1000</div>
<div class="a dr" style="top:440px"></div>
<div class="a dv" style="left:336px;top:440px;height:18px"></div>
<div class="a dv" style="left:689px;top:440px;height:18px"></div>
<div class="a dv" style="left:701px;top:440px;height:18px"></div>
<div class="t" style="left:45px;top:441px;color:#000">Distancia de espacio horizontal</div>
<div class="t" style="left:339px;top:441px;color:#000">0.0100</div>
<div class="a dr" style="top:458px"></div>
<div class="a dv" style="left:336px;top:458px;height:18px"></div>
<div class="a dv" style="left:689px;top:458px;height:18px"></div>
<div class="a dv" style="left:701px;top:458px;height:18px"></div>
<div class="t" style="left:45px;top:459px;color:#000">Distancia de espacio vertical</div>
<div class="t" style="left:339px;top:459px;color:#000">0.0100</div>
<div class="a" style="left:43px;top:476px;width:659px;height:21px;background:#97b3d3"></div>
<div class="a" style="left:43px;top:497px;width:659px;height:1px;background:#3f4a58"></div>
<div class="t" style="left:45px;top:481px;font-weight:bold;font-size:12px;letter-spacing:-0.2px">Soportes</div>
<svg class="a" style="left:689px;top:482px" width="8" height="9" viewBox="0 0 8 9"><path d="M1 4.2L4 1.2L7 4.2M1 8L4 5L7 8" fill="none" stroke="#000" stroke-width="1.45"/></svg>
<div class="a dr" style="top:498px"></div>
<div class="a dv" style="left:336px;top:498px;height:18px"></div>
<div class="a dv" style="left:689px;top:498px;height:18px"></div>
<div class="a dv" style="left:701px;top:498px;height:18px"></div>
<div class="t" style="left:45px;top:499px;color:#000">Soporte derecho</div>
<div class="t" style="left:339px;top:499px;color:#000">Ninguno</div>
<div class="a dr" style="top:516px"></div>
<div class="a dv" style="left:336px;top:516px;height:18px"></div>
<div class="a dv" style="left:689px;top:516px;height:18px"></div>
<div class="a dv" style="left:701px;top:516px;height:18px"></div>
<div class="t" style="left:45px;top:517px;color:#8a8a8a">Tipo de soporte derecho</div>
<div class="t" style="left:339px;top:517px;color:#8a8a8a">&lt;Ninguno&gt;</div>
<div class="a dr" style="top:534px"></div>
<div class="a dv" style="left:336px;top:534px;height:18px"></div>
<div class="a dv" style="left:689px;top:534px;height:18px"></div>
<div class="a dv" style="left:701px;top:534px;height:18px"></div>
<div class="t" style="left:45px;top:535px;color:#8a8a8a">Desfase lateral derecho</div>
<div class="t" style="left:339px;top:535px;color:#8a8a8a">0.0000</div>
<div class="a dr" style="top:552px"></div>
<div class="a dv" style="left:336px;top:552px;height:18px"></div>
<div class="a dv" style="left:689px;top:552px;height:18px"></div>
<div class="a dv" style="left:701px;top:552px;height:18px"></div>
<div class="t" style="left:45px;top:553px;color:#000">Soporte izquierdo</div>
<div class="t" style="left:339px;top:553px;color:#000">Ninguno</div>
<div class="a dr" style="top:570px"></div>
<div class="a dv" style="left:336px;top:570px;height:18px"></div>
<div class="a dv" style="left:689px;top:570px;height:18px"></div>
<div class="a dv" style="left:701px;top:570px;height:18px"></div>
<div class="t" style="left:45px;top:571px;color:#8a8a8a">Tipo de soporte izquierdo</div>
<div class="t" style="left:339px;top:571px;color:#8a8a8a">&lt;Ninguno&gt;</div>
<div class="a dr" style="top:588px"></div>
<div class="a dv" style="left:336px;top:588px;height:18px"></div>
<div class="a dv" style="left:689px;top:588px;height:18px"></div>
<div class="a dv" style="left:701px;top:588px;height:18px"></div>
<div class="t" style="left:45px;top:589px;color:#8a8a8a">Desfase lateral izquierdo</div>
<div class="t" style="left:339px;top:589px;color:#8a8a8a">0.0000</div>
<div class="a dr" style="top:606px"></div>
<div class="a dv" style="left:336px;top:606px;height:18px"></div>
<div class="a dv" style="left:689px;top:606px;height:18px"></div>
<div class="a dv" style="left:701px;top:606px;height:18px"></div>
<div class="t" style="left:45px;top:607px;color:#000">Soporte intermedio</div>
<div class="a" style="left:341px;top:609px;width:12px;height:12px;background:#f4f4f4;border:1px solid #6c6c6c;border-radius:3px"></div>
<div class="a dr" style="top:624px"></div>
<div class="a dv" style="left:336px;top:624px;height:18px"></div>
<div class="a dv" style="left:689px;top:624px;height:18px"></div>
<div class="a dv" style="left:701px;top:624px;height:18px"></div>
<div class="t" style="left:45px;top:625px;color:#8a8a8a">Tipo de soporte intermedio</div>
<div class="t" style="left:339px;top:625px;color:#8a8a8a">&lt;Ninguno&gt;</div>
<div class="a dr" style="top:642px"></div>
<div class="a dv" style="left:336px;top:642px;height:18px"></div>
<div class="a dv" style="left:689px;top:642px;height:18px"></div>
<div class="a dv" style="left:701px;top:642px;height:18px"></div>
<div class="t" style="left:45px;top:643px;color:#8a8a8a">Número de soporte intermedio</div>
<div class="t" style="left:339px;top:643px;color:#8a8a8a">0</div>
<div class="a" style="left:43px;top:660px;width:659px;height:21px;background:#97b3d3"></div>
<div class="a" style="left:43px;top:681px;width:659px;height:1px;background:#3f4a58"></div>
<div class="t" style="left:45px;top:665px;font-weight:bold;font-size:12px;letter-spacing:-0.2px">Gráficos</div>
<svg class="a" style="left:689px;top:666px" width="8" height="9" viewBox="0 0 8 9"><path d="M1 4.2L4 1.2L7 4.2M1 8L4 5L7 8" fill="none" stroke="#000" stroke-width="1.45"/></svg>
<div class="a dr" style="top:682px"></div>
<div class="a dv" style="left:336px;top:682px;height:18px"></div>
<div class="a dv" style="left:689px;top:682px;height:18px"></div>
<div class="a dv" style="left:701px;top:682px;height:18px"></div>
<div class="t" style="left:45px;top:683px;color:#000">Tipo de marca de corte</div>
<div class="t" style="left:339px;top:683px;color:#000">Zig-zag único</div>
<div class="a" style="left:43px;top:700px;width:659px;height:21px;background:#97b3d3"></div>
<div class="a" style="left:43px;top:721px;width:659px;height:1px;background:#3f4a58"></div>
<div class="t" style="left:45px;top:705px;font-weight:bold;font-size:12px;letter-spacing:-0.2px">Datos de identidad</div>
<svg class="a" style="left:689px;top:706px" width="8" height="9" viewBox="0 0 8 9"><path d="M1 4.2L4 1.2L7 4.2M1 8L4 5L7 8" fill="none" stroke="#000" stroke-width="1.45"/></svg>
<div class="a dr" style="top:722px"></div>
<div class="a dv" style="left:336px;top:722px;height:18px"></div>
<div class="a dv" style="left:689px;top:722px;height:18px"></div>
<div class="a dv" style="left:701px;top:722px;height:18px"></div>
<div class="t" style="left:45px;top:723px;color:#000">Imagen de tipo</div>
<div class="a dr" style="top:740px"></div>
<div class="a dv" style="left:336px;top:740px;height:18px"></div>
<div class="a dv" style="left:689px;top:740px;height:18px"></div>
<div class="a dv" style="left:701px;top:740px;height:18px"></div>
<div class="t" style="left:45px;top:741px;color:#000">Nota clave</div>
<div class="a dr" style="top:758px"></div>
<div class="a dv" style="left:336px;top:758px;height:18px"></div>
<div class="a dv" style="left:689px;top:758px;height:18px"></div>
<div class="a dv" style="left:701px;top:758px;height:18px"></div>
<div class="t" style="left:45px;top:759px;color:#000">Modelo</div>
<div class="a" style="left:711px;top:190px;width:2px;height:383px;background:#858585;border-radius:1px"></div>
<div class="t" style="left:40px;top:790px;font-size:11px">Ordenar por:</div>
<div class="a" style="left:112px;top:784px;width:27px;height:23px;background:#cce6fa;border:1px solid #a6cff0;border-radius:3px"></div>
<svg class="a" style="left:105px;top:778px" width="100" height="34" viewBox="105 778 100 34"><path d="M117 791.5H124.7M117 794.5H121.7M117 797.5H127.7M117 800.5H124.7" stroke="#454545" stroke-width="1.1"/><path d="M129.5 790.5V794.5M129.5 797V801.5" stroke="#222" stroke-width="1.2"/><path d="M127.3 791.3L129.5 788L131.7 791.3ZM127.3 800.6L129.5 804L131.7 800.6Z" fill="#222"/><path d="M147.3 794L150.5 787.2L153.7 794M148.4 791.7H152.6" stroke="#2f8ad8" stroke-width="1" fill="none"/><path d="M147.5 796.8H153.6L147.5 802.6H153.8" stroke="#4a4a4a" stroke-width="1.1" fill="none"/><path d="M159.4 787V801" stroke="#222" stroke-width="1.1"/><path d="M156.9 800.5L159.4 804L161.9 800.5Z" fill="#222"/><path d="M178.3 787.6H184.5L178.3 793.5H184.6" stroke="#4a4a4a" stroke-width="1.1" fill="none"/><path d="M178.2 803L181.5 796.2L184.8 803M179.3 800.7H183.7" stroke="#2f8ad8" stroke-width="1" fill="none"/><path d="M190.6 787V801" stroke="#222" stroke-width="1.1"/><path d="M188.1 800.5L190.6 804L193.1 800.5Z" fill="#222"/></svg>
<div class="a" style="left:42px;top:822px;width:86px;height:20px;background:#f6f6f6;border:1px solid #e8e8e8;border-radius:3px"></div>
<div class="t" style="left:42px;top:825px;width:86px;text-align:center;color:#9d9d9d;font-size:11px">&lt;&lt; Vista previa</div>
<div class="a" style="left:442px;top:821px;width:88px;height:22px;background:#fdfdfd;border:1.5px solid #1a5fa8;border-radius:4px"></div>
<div class="t" style="left:442px;top:825px;width:88px;text-align:center;font-size:11px">Aceptar</div>
<div class="a" style="left:538px;top:821px;width:88px;height:22px;background:#fdfdfd;border:1px solid #d6d6d6;border-bottom-color:#c4c4c4;border-radius:4px"></div>
<div class="t" style="left:538px;top:825px;width:88px;text-align:center;font-size:11px">Cancelar</div>
<div class="a" style="left:634px;top:821px;width:88px;height:22px;background:#fdfdfd;border:1px solid #d6d6d6;border-bottom-color:#c4c4c4;border-radius:4px"></div>
<div class="t" style="left:634px;top:825px;width:88px;text-align:center;font-size:11px">Aplicar</div>
<div class="a" style="left:731px;top:848px;width:2px;height:2px;background:#b9b9b9"></div>
<div class="a" style="left:731px;top:851px;width:2px;height:2px;background:#b9b9b9"></div>
<div class="a" style="left:728px;top:851px;width:2px;height:2px;background:#b9b9b9"></div>
<div class="a" style="left:731px;top:854px;width:2px;height:2px;background:#b9b9b9"></div>
<div class="a" style="left:728px;top:854px;width:2px;height:2px;background:#b9b9b9"></div>
<div class="a" style="left:725px;top:854px;width:2px;height:2px;background:#b9b9b9"></div></div>
</body></html>
